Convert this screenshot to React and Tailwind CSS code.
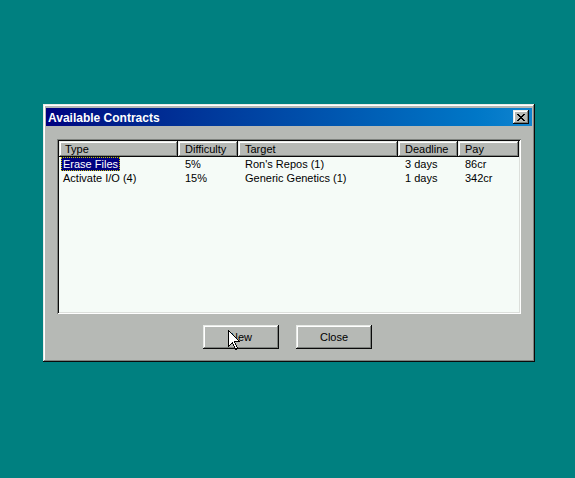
import React from 'react';

const raised = "shadow-[inset_-1px_-1px_#0a0a0a,inset_1px_1px_#e8ebe7,inset_-2px_-2px_#7e827e,inset_2px_2px_#ffffff]";
const sunken = "shadow-[inset_1px_1px_#7e827e,inset_-1px_-1px_#ffffff,inset_2px_2px_#0a0a0a,inset_-2px_-2px_#dcdfdb]";

const columns = [
  { label: "Type", w: "w-[119px]", pad: "pl-[6px]" },
  { label: "Difficulty", w: "w-[60px]", pad: "pl-[7px]" },
  { label: "Target", w: "w-[160px]", pad: "pl-[7px]" },
  { label: "Deadline", w: "w-[60px]", pad: "pl-[7px]" },
  { label: "Pay", w: "w-[61px]", pad: "pl-[7px]" },
];

const contracts = [
  ["Erase Files", "5%", "Ron's Repos (1)", "3 days", "86cr"],
  ["Activate I/O (4)", "15%", "Generic Genetics (1)", "1 days", "342cr"],
];

function Cursor() {
  return (
    <svg className="absolute left-[25px] top-[5px]" width="13" height="21" viewBox="0 0 13 21">
      <path d="M0.5 0.5 L0.5 16.5 L4.5 12.5 L7.5 19.5 L9.5 18.5 L6.5 11.5 L11.5 11.5 Z" fill="#ffffff" stroke="#000000" strokeWidth="1" shapeRendering="crispEdges" />
    </svg>
  );
}

export default function App() {
  return (
    <div className="w-[575px] h-[478px] bg-[#008080] pt-[104px] pl-[43px] font-['Liberation_Sans',Arial,sans-serif] text-[11px] text-black overflow-hidden">
      <div className={`w-[492px] h-[258px] bg-[#b6b9b5] pt-[4px] px-[3px] pb-[3px] flex flex-col ${raised}`}>
        {/* title bar */}
        <div className="h-[18px] flex items-center justify-between pl-[2px] pr-[3px] bg-gradient-to-r from-[#000080] to-[#1084d0]">
          <span className="text-white font-bold text-[12px] leading-none pt-[1px]">Available Contracts</span>
          <div className={`w-[16px] h-[14px] bg-[#b6b9b5] flex items-center justify-center ${raised}`}>
            <svg width="8" height="7" viewBox="0 0 8 7" shapeRendering="crispEdges">
              <path d="M0 0h2v1h-2zM6 0h2v1h-2zM1 1h2v1h-2zM5 1h2v1h-2zM2 2h4v1h-4zM3 3h2v1h-2zM2 4h4v1h-4zM1 5h2v1h-2zM5 5h2v1h-2zM0 6h2v1h-2zM6 6h2v1h-2z" fill="#000" />
            </svg>
          </div>
        </div>

        {/* list */}
        <div className={`ml-[11px] mt-[13px] w-[464px] h-[175px] bg-[#f5fbf7] p-[2px] ${sunken}`}>
          <div className="flex h-[16px]">
            {columns.map((c) => (
              <div key={c.label} className={`${c.w} ${c.pad} h-full bg-[#b6b9b5] flex items-center leading-none ${raised}`}>
                {c.label}
              </div>
            ))}
          </div>
          <div>
            {contracts.map((row, i) => (
              <div key={i} className="flex h-[14px] items-center leading-none">
                {row.map((cell, j) => (
                  <div key={j} className={`${columns[j].w} ${j === 0 ? "pl-[2px]" : "pl-[5px]"} h-[14px] flex items-center`}>
                    {i === 0 && j === 0 ? (
                      <span className="bg-[#000080] text-white px-[2px] h-[14px] flex items-center outline-1 outline-dotted outline-[#c8c800] -outline-offset-1">{cell}</span>
                    ) : (
                      <span className="px-[2px]">{cell}</span>
                    )}
                  </div>
                ))}
              </div>
            ))}
          </div>
        </div>

        {/* buttons */}
        <div className="flex gap-[17px] pl-[157px] mt-[11px]">
          <div className={`relative w-[76px] h-[24px] bg-[#b6b9b5] flex items-center justify-center ${raised}`}>
            New
            <Cursor />
          </div>
          <div className={`w-[76px] h-[24px] bg-[#b6b9b5] flex items-center justify-center ${raised}`}>
            Close
          </div>
        </div>
      </div>
    </div>
  );
}
